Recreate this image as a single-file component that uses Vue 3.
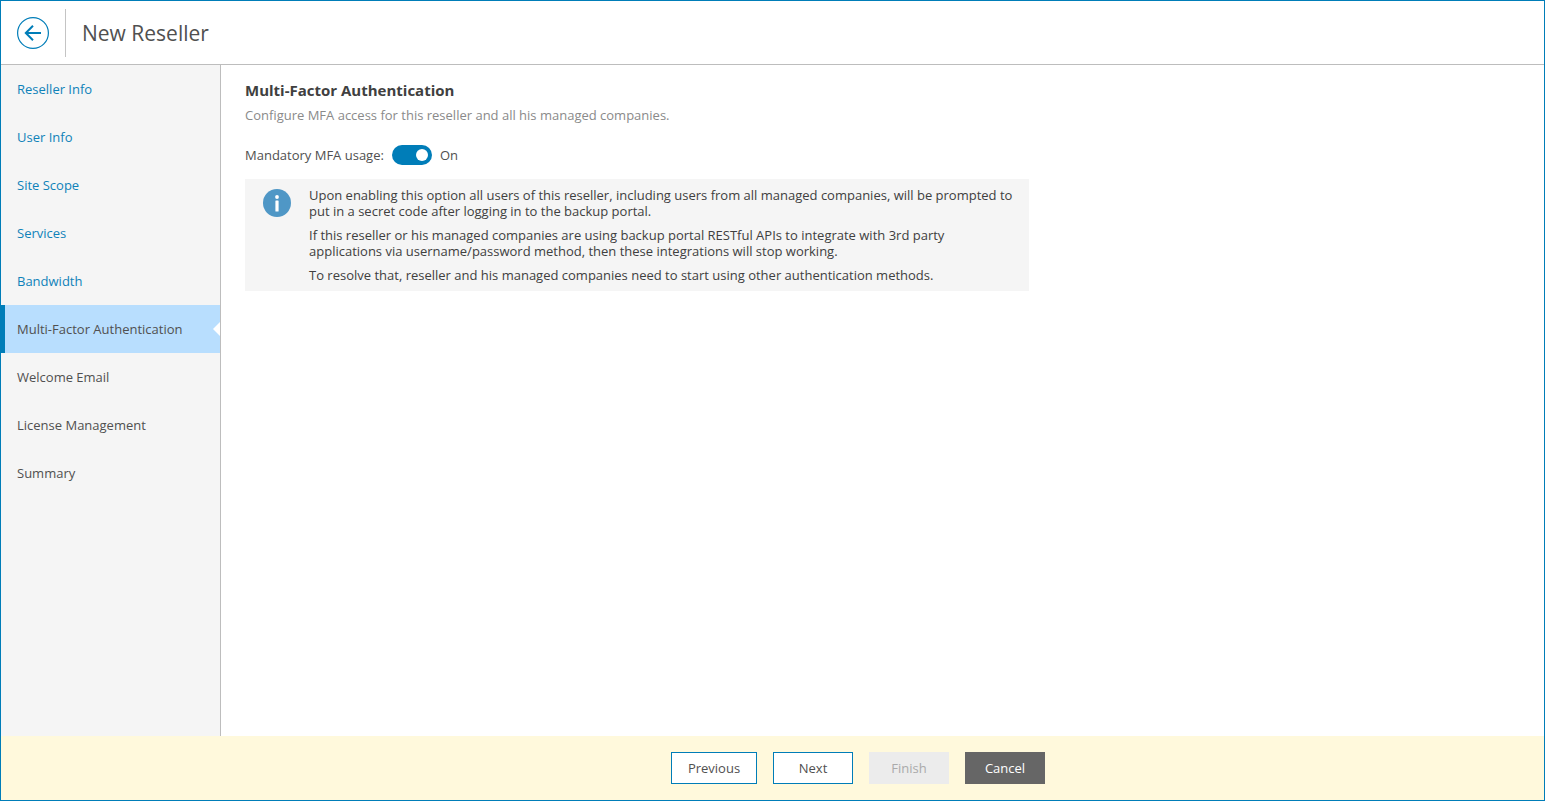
<script setup>
const steps = [
  { label: 'Reseller Info', done: true },
  { label: 'User Info', done: true },
  { label: 'Site Scope', done: true },
  { label: 'Services', done: true },
  { label: 'Bandwidth', done: true },
  { label: 'Multi-Factor Authentication', active: true },
  { label: 'Welcome Email' },
  { label: 'License Management' },
  { label: 'Summary' },
]
</script>

<template>
  <div class="window">
    <header class="header">
      <button class="back" aria-label="Back">
        <svg width="32" height="32" viewBox="0 0 32 32" fill="none" stroke="#007db8">
          <circle cx="16" cy="16" r="15.4" stroke-width="1.2" />
          <path d="M8.5 16H24M16 8.8L8.8 16l7.2 7.2" stroke-width="2" />
        </svg>
      </button>
      <div class="sep"></div>
      <h1 class="title">New Reseller</h1>
    </header>
    <div class="body">
      <nav class="side">
        <div
          v-for="s in steps"
          :key="s.label"
          class="step"
          :class="{ done: s.done, active: s.active }"
        >{{ s.label }}</div>
      </nav>
      <main class="main">
        <h2 class="h">Multi-Factor Authentication</h2>
        <p class="sub">Configure MFA access for this reseller and all his managed companies.</p>
        <div class="toggle-row">
          <span>Mandatory MFA usage:</span>
          <span class="switch"><span class="knob"></span></span>
          <span>On</span>
        </div>
        <div class="info">
          <svg class="info-ico" width="28" height="28" viewBox="0 0 28 28">
            <circle cx="14" cy="14" r="14" fill="#4f97c6" />
            <circle cx="14" cy="8" r="1.9" fill="#fff" />
            <rect x="12.4" y="11.5" width="3.2" height="11" rx="0.6" fill="#fff" />
          </svg>
          <div class="info-text">
            <p>Upon enabling this option all users of this reseller, including users from all managed companies, will be prompted to put in a secret code after logging in to the backup portal.</p>
            <p>If this reseller or his managed companies are using backup portal RESTful APIs to integrate with 3rd party applications via username/password method, then these integrations will stop working.</p>
            <p>To resolve that, reseller and his managed companies need to start using other authentication methods.</p>
          </div>
        </div>
      </main>
    </div>
    <footer class="footer">
      <button class="btn outline prev">Previous</button>
      <button class="btn outline next">Next</button>
      <button class="btn disabled">Finish</button>
      <button class="btn dark">Cancel</button>
    </footer>
  </div>
</template>

<style>
html, body { margin: 0; padding: 0; }
</style>

<style scoped>
.window {
  box-sizing: border-box;
  width: 1545px;
  height: 801px;
  border: 1px solid #007db8;
  display: flex;
  flex-direction: column;
  font-family: "Open Sans", sans-serif;
  font-size: 13px;
  color: #505050;
  background: #fff;
}
.header {
  box-sizing: border-box;
  height: 64px;
  padding-top: 1px;
  flex: none;
  display: flex;
  align-items: center;
  border-bottom: 1px solid #bdbdbd;
}
.back {
  margin-left: 16px;
  padding: 0;
  border: 0;
  background: none;
  width: 32px;
  height: 32px;
}
.sep {
  width: 1px;
  height: 48px;
  background: #c4c4c4;
  margin-left: 16px;
}
.title {
  margin: 0 0 0 16px;
  font-size: 21px;
  font-weight: 400;
  color: #505050;
}
.body {
  flex: 1;
  display: flex;
  min-height: 0;
}
.side {
  width: 219px;
  flex: none;
  background: #f5f5f5;
  border-right: 1px solid #bdbdbd;
}
.step {
  height: 48px;
  line-height: 48px;
  padding-left: 16px;
  position: relative;
}
.step.done { color: #0f82b9; }
.step.active {
  background: #b8defe;
  box-shadow: inset 4px 0 0 #007db8;
}
.step.active::after {
  content: "";
  position: absolute;
  right: 0;
  top: 17px;
  border-top: 7px solid transparent;
  border-bottom: 7px solid transparent;
  border-right: 7px solid #fff;
}
.main {
  flex: 1;
  padding: 15px 24px;
}
.h {
  margin: 0;
  font-size: 15px;
  line-height: 20px;
  font-weight: 700;
  color: #404040;
}
.sub {
  margin: 5px 0 0;
  line-height: 20px;
  color: #8a8a8a;
}
.toggle-row {
  margin-top: 20px;
  display: flex;
  align-items: center;
  height: 20px;
}
.switch {
  position: relative;
  width: 40px;
  height: 20px;
  border-radius: 10px;
  background: #007db8;
  margin: 0 8px;
}
.knob {
  position: absolute;
  right: 4px;
  top: 4px;
  width: 12px;
  height: 12px;
  border-radius: 50%;
  background: #fff;
}
.info {
  margin-top: 14px;
  width: 784px;
  height: 112px;
  box-sizing: border-box;
  background: #f5f5f5;
  display: flex;
  padding: 8px 14px 0 18px;
}
.info-ico { flex: none; margin-top: 2px; }
.info-text { margin-left: 18px; }
.info-text p {
  margin: 0 0 8px;
  line-height: 16px;
  color: #404040;
}
.footer {
  height: 64px;
  flex: none;
  background: #fff9dc;
  display: flex;
  align-items: center;
  justify-content: center;
  gap: 16px;
  padding-left: 171px;
}
.btn {
  height: 32px;
  box-sizing: border-box;
  font: inherit;
  padding: 0;
  border: 1px solid transparent;
  width: 80px;
}
.outline { background: #fff; border-color: #007db8; color: #505050; }
.prev { width: 86px; }
.disabled { background: #ececec; color: #aaa; }
.dark { background: #666; color: #fff; }
</style>
